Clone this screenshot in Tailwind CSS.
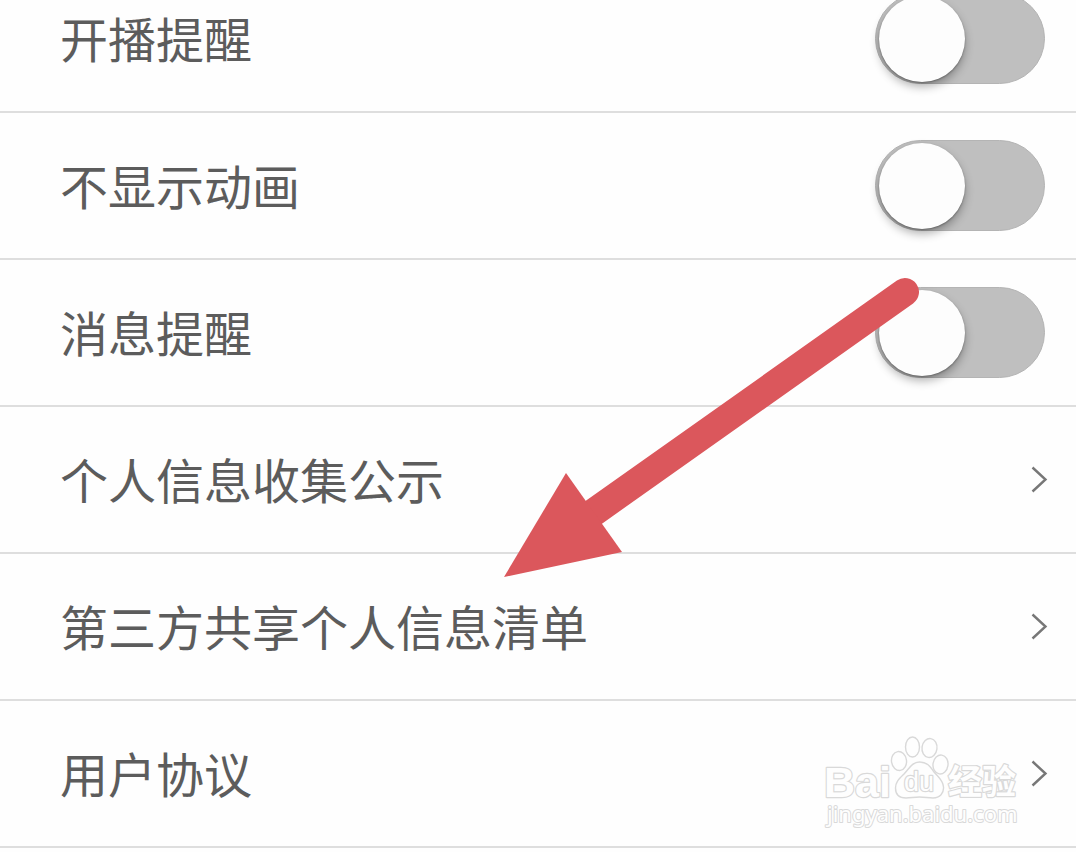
<!DOCTYPE html>
<html lang="zh-CN">

<head>
   <meta charset="UTF-8">
   <meta name="viewport" content="width=device-width, initial-scale=1.0">
   <title>设置</title>
   <script src="https://cdn.jsdelivr.net/npm/@tailwindcss/browser@4"></script>
</head>

<body class="bg-[#fefefe] text-[#5c5c5c] font-['Noto_Sans_CJK_SC',sans-serif] overflow-hidden">
   <main class="relative flow-root">
      <!-- the list is scrolled a little, so the first row starts above the window -->
      <ul class="-mt-[34px] text-[48px] leading-[72px]">
         <li class="flex items-center justify-between h-[147px] pl-[60px] pr-[31px] border-b-2 border-[#dedede]">
            <label for="live" class="pb-1">开播提醒</label>
            <input id="live" type="checkbox"
               class="appearance-none flex items-center w-[170px] h-[91px] rounded-full bg-[#bfbfbf] border border-[#b4b4b4] pl-[3px] before:block before:size-[86px] before:rounded-full before:bg-[#fdfdfd] before:shadow-[0_5px_10px_rgba(0,0,0,0.3),0_1px_2px_rgba(0,0,0,0.3)] checked:bg-green-500 checked:pl-[79px]">
         </li>
         <li class="flex items-center justify-between h-[147px] pl-[60px] pr-[31px] border-b-2 border-[#dedede]">
            <label for="animation" class="pb-1">不显示动画</label>
            <input id="animation" type="checkbox"
               class="appearance-none flex items-center w-[170px] h-[91px] rounded-full bg-[#bfbfbf] border border-[#b4b4b4] pl-[3px] before:block before:size-[86px] before:rounded-full before:bg-[#fdfdfd] before:shadow-[0_5px_10px_rgba(0,0,0,0.3),0_1px_2px_rgba(0,0,0,0.3)] checked:bg-green-500 checked:pl-[79px]">
         </li>
         <li class="flex items-center justify-between h-[147px] pl-[60px] pr-[31px] border-b-2 border-[#dedede]">
            <label for="message" class="pb-1">消息提醒</label>
            <input id="message" type="checkbox"
               class="appearance-none flex items-center w-[170px] h-[91px] rounded-full bg-[#bfbfbf] border border-[#b4b4b4] pl-[3px] before:block before:size-[86px] before:rounded-full before:bg-[#fdfdfd] before:shadow-[0_5px_10px_rgba(0,0,0,0.3),0_1px_2px_rgba(0,0,0,0.3)] checked:bg-green-500 checked:pl-[79px]">
         </li>
         <li class="border-b-2 border-[#dedede]">
            <a href="#collect" class="flex items-center justify-between h-[145px] pl-[60px] pr-[28px]">
               <span class="pb-1">个人信息收集公示</span>
               <svg class="w-[18px] h-[28px]" viewBox="0 0 18 28" fill="none" stroke="#777" stroke-width="2.4">
                  <path d="M2.500 1.500 L15.500 13.500 L2.500 25.500" />
               </svg>
            </a>
         </li>
         <li class="border-b-2 border-[#dedede]">
            <a href="#share" class="flex items-center justify-between h-[145px] pl-[60px] pr-[28px]">
               <span class="pb-1">第三方共享个人信息清单</span>
               <svg class="w-[18px] h-[28px]" viewBox="0 0 18 28" fill="none" stroke="#777" stroke-width="2.4">
                  <path d="M2.500 1.500 L15.500 13.500 L2.500 25.500" />
               </svg>
            </a>
         </li>
         <li class="border-b-2 border-[#dedede]">
            <a href="#agreement" class="flex items-center justify-between h-[145px] pl-[60px] pr-[28px]">
               <span class="pb-1">用户协议</span>
               <svg class="w-[18px] h-[28px]" viewBox="0 0 18 28" fill="none" stroke="#777" stroke-width="2.4">
                  <path d="M2.500 1.500 L15.500 13.500 L2.500 25.500" />
               </svg>
            </a>
         </li>
      </ul>

      <!-- arrow -->
      <svg class="absolute right-[156px] top-[277px] w-[416px] h-[301px] pointer-events-none" viewBox="504 277 416 301">
         <path d="M905 292 L590 515" stroke="#db575c" stroke-width="28" stroke-linecap="round" />
         <path d="M504 577 L566 473 L622 552 Z" fill="#db575c" />
      </svg>

      <!-- watermark -->
      <svg class="absolute right-[50px] top-[732px] w-[206px] h-[100px] pointer-events-none" viewBox="820 732 206 100"
         fill="#fefefe" stroke="#d9d9d9" stroke-width="1.4">
         <ellipse cx="899" cy="761" rx="7.5" ry="9.5" transform="rotate(-8 899 761)" />
         <ellipse cx="912.5" cy="747" rx="7" ry="10" />
         <ellipse cx="929.5" cy="748" rx="7.5" ry="9.5" transform="rotate(8 929.5 748)" />
         <ellipse cx="940.5" cy="764.5" rx="7.5" ry="9.5" transform="rotate(8 940.5 764.5)" />
         <path d="M919.500 762 C912 762 909 769 904 774 C899 779 895.500 782 895.500 788 C895.500 795 900 798 906 798 C911 798 914 797 919.500 797 C925 797 928 798 933 798 C940 798 944 793 943.500 787 C943 780 938 777 934 772 C930 766 927 762 919.500 762 Z" />
         <g paint-order="stroke" stroke-width="2.4" stroke-linejoin="round">
            <text x="824" y="797" font-family="Liberation Sans, sans-serif" font-weight="700" font-size="43">Bai</text>
            <text x="904" y="791" font-family="Liberation Sans, sans-serif" font-weight="400" font-size="27">du</text>
            <text x="948" y="794" font-family="Noto Sans CJK SC, sans-serif" font-weight="700" font-size="34">经验</text>
            <text x="827" y="822" font-family="Noto Sans, sans-serif" font-size="22" stroke-width="2">jingyan.baidu.com</text>
         </g>
      </svg>
   </main>
</body>

</html>
